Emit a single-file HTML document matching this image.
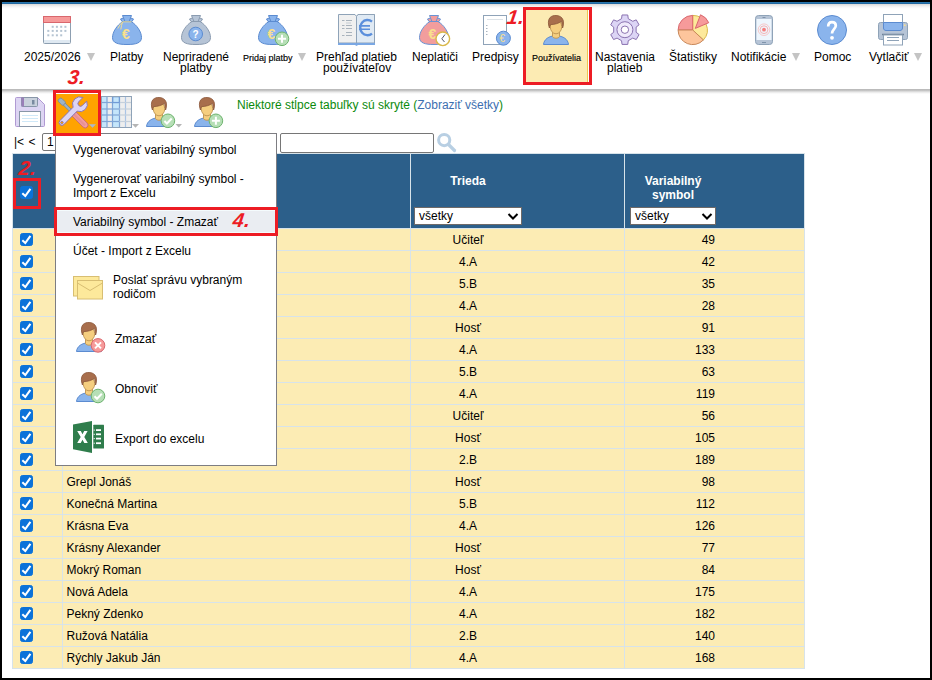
<!DOCTYPE html><html><head><meta charset="utf-8"><style>
*{box-sizing:border-box}html,body{margin:0;padding:0;width:932px;height:680px;overflow:hidden;background:#000}
body{font-family:"Liberation Sans",sans-serif;font-size:12px;color:#000;position:relative}
.a{position:absolute}.t{position:absolute;white-space:nowrap;line-height:12px;font-size:12px}.sm{-webkit-text-stroke:0.15px #000;transform:scaleY(1.1);transform-origin:0 7px}
.arr{position:absolute;width:0;height:0;border-left:4.5px solid transparent;border-right:4.5px solid transparent;border-top:8px solid #c4c4c4}
.n{position:absolute;font-weight:bold;font-style:italic;font-size:20px;line-height:20px;color:#ed1c24;white-space:nowrap;transform:skewX(-8deg);transform-origin:0 17px;letter-spacing:0.6px}
svg{position:absolute;left:0;top:0;overflow:visible}
</style></head><body>
<div class="a" style="left:2px;top:2px;width:928px;height:676px;background:#fff"></div>
<div class="a" style="left:2px;top:2px;width:928px;height:1px;background:#2a76ac"></div>
<div class="a" style="left:2px;top:3px;width:928px;height:1px;background:#2168a0"></div>
<div class="a" style="left:2px;top:4px;width:928px;height:5px;background:linear-gradient(#dcd8d4,#e3e3e3 20%,#eeeeee 40%,#f6f6f6 60%,#fbfbfb 80%,#fff)"></div>
<div class="a" style="left:2px;top:89px;width:928px;height:5px;background:linear-gradient(#bdbdbd,#b9b9b9 20%,#d0d0d0 40%,#e6e6e6 60%,#f4f4f4 80%,#fff)"></div>
<div class="a" style="left:523px;top:7px;width:69px;height:78px;background:#fcebb3"></div>
<div class="a" style="left:587px;top:10px;width:1px;height:72px;background:#eec74e"></div><div class="a" style="left:588px;top:10px;width:1px;height:72px;background:#fff"></div>
<div class="t" style="left:24px;top:51px;">2025/2026</div>
<div class="arr" style="left:87px;top:53px"></div>
<div class="t" style="left:110px;top:51px;">Platby</div>
<div class="t" style="left:163px;top:51px;">Nepriradené</div>
<div class="t" style="left:180px;top:62px;">platby</div>
<div class="t sm" style="left:243px;top:54px;font-size:9px;line-height:9px;">Pridaj platby</div>
<div class="arr" style="left:298px;top:53px"></div>
<div class="t" style="left:316px;top:51px;">Prehľad platieb</div>
<div class="t" style="left:323px;top:62px;">používateľov</div>
<div class="t" style="left:412px;top:51px;">Neplatiči</div>
<div class="t" style="left:472px;top:51px;">Predpisy</div>
<div class="t sm" style="left:532px;top:54px;font-size:9px;line-height:9px;">Používatelia</div>
<div class="t" style="left:595px;top:51px;">Nastavenia</div>
<div class="t" style="left:607px;top:62px;">platieb</div>
<div class="t" style="left:669px;top:51px;">Štatistiky</div>
<div class="t" style="left:731px;top:51px;">Notifikácie</div>
<div class="arr" style="left:792px;top:53px"></div>
<div class="t" style="left:814px;top:51px;">Pomoc</div>
<div class="t" style="left:869px;top:51px;">Vytlačiť</div>
<div class="arr" style="left:914px;top:53px"></div>
<svg width="932" height="680" viewBox="0 0 932 680"><rect x="43.5" y="16.5" width="27" height="27" rx="1" fill="#fff" stroke="#8d9fb1"/><rect x="44" y="40" width="26" height="3" fill="#dfe9f2"/><rect x="43.5" y="16.5" width="27" height="6" fill="#f69a9a" stroke="#d9676d"/><rect x="51.7" y="25.8" width="2" height="2" fill="#b5c4d2"/><rect x="55.9" y="25.8" width="2" height="2" fill="#b5c4d2"/><rect x="60.2" y="25.8" width="2" height="2" fill="#b5c4d2"/><rect x="64.4" y="25.8" width="2" height="2" fill="#b5c4d2"/><rect x="47.3" y="29.9" width="2" height="2" fill="#b5c4d2"/><rect x="51.7" y="29.9" width="2" height="2" fill="#b5c4d2"/><rect x="55.9" y="29.9" width="2" height="2" fill="#b5c4d2"/><rect x="60.2" y="29.9" width="2" height="2" fill="#b5c4d2"/><rect x="64.4" y="29.9" width="2" height="2" fill="#b5c4d2"/><rect x="47.3" y="34.3" width="2" height="2" fill="#b5c4d2"/><rect x="51.7" y="34.3" width="2" height="2" fill="#b5c4d2"/><rect x="55.9" y="34.3" width="2" height="2" fill="#b5c4d2"/><rect x="60.2" y="34.3" width="2" height="2" fill="#b5c4d2"/><g transform="translate(0,0)"><path d="M123 21.5 L131 21.5 C137 25 141.5 32 141.5 37.5 C141.5 43 136 44.5 127 44.5 C118 44.5 112.5 43 112.5 37.5 C112.5 32 117 25 123 21.5Z" fill="#8ab4ec" stroke="#5b8bd0"/><path d="M122.5 15.5 L131.5 15.5 L130.5 18 L133.5 19 L132 21.5 L122 21.5 L120.5 19 L123.5 18Z" fill="#8ab4ec" stroke="#5b8bd0" stroke-linejoin="round"/><path d="M123.5 18 L125 21.5 M130.5 18 L129 21.5" stroke="#5b8bd0" fill="none"/></g><path d="M122.5 21.8 H131.5 M122.5 22 Q119.5 24.5 117.8 28.5 M122.5 22 Q121.5 25 120.8 29.5" stroke="#f9e08c" stroke-width="0.9" fill="none"/><text x="122" y="38.8" font-family="Liberation Sans" font-weight="bold" font-size="14" fill="#f9e08c">€</text><g transform="translate(69,0)"><path d="M123 21.5 L131 21.5 C137 25 141.5 32 141.5 37.5 C141.5 43 136 44.5 127 44.5 C118 44.5 112.5 43 112.5 37.5 C112.5 32 117 25 123 21.5Z" fill="#b6c4d6" stroke="#8a9bb0"/><path d="M122.5 15.5 L131.5 15.5 L130.5 18 L133.5 19 L132 21.5 L122 21.5 L120.5 19 L123.5 18Z" fill="#b6c4d6" stroke="#8a9bb0" stroke-linejoin="round"/><path d="M123.5 18 L125 21.5 M130.5 18 L129 21.5" stroke="#8a9bb0" fill="none"/></g><circle cx="195.7" cy="34" r="6.8" fill="#8ab4ec" stroke="#5b8bd0"/><text x="192.6" y="38" font-family="Liberation Sans" font-weight="bold" font-size="10" fill="#fff">?</text><g transform="translate(146,0)"><path d="M123 21.5 L131 21.5 C137 25 141.5 32 141.5 37.5 C141.5 43 136 44.5 127 44.5 C118 44.5 112.5 43 112.5 37.5 C112.5 32 117 25 123 21.5Z" fill="#8ab4ec" stroke="#5b8bd0"/><path d="M122.5 15.5 L131.5 15.5 L130.5 18 L133.5 19 L132 21.5 L122 21.5 L120.5 19 L123.5 18Z" fill="#8ab4ec" stroke="#5b8bd0" stroke-linejoin="round"/><path d="M123.5 18 L125 21.5 M130.5 18 L129 21.5" stroke="#5b8bd0" fill="none"/></g><text x="267.5" y="38.8" font-family="Liberation Sans" font-weight="bold" font-size="14" fill="#f9e08c">€</text><circle cx="282" cy="38.8" r="6.8" fill="#b6dfb6" stroke="#6db36d"/><path d="M282 34.8 V42.8 M278 38.8 H286" stroke="#fff" stroke-width="2"/><path d="M338.5 43 V14.5 H355 L356.5 16.5 L358 14.5 H374.5 V43Z" fill="#f0f0f0" stroke="#8fa3b8"/><path d="M356.5 16.5 L358 14.5 H374.5 V43 H356.5Z" fill="#e0eaf4" stroke="#8fa3b8"/><path d="M338 43 H375 V45 H358 L356.5 46 L355 45 H338Z" fill="#7aa7e3"/><path d="M342 20.5 H344.5 M346 20.5 H352" stroke="#a9b3bd"/><path d="M342 25.5 H344.5 M346 25.5 H352" stroke="#a9b3bd"/><path d="M342 28.5 H344.5 M346 28.5 H352" stroke="#a9b3bd"/><path d="M342 35.5 H344.5 M346 35.5 H352" stroke="#a9b3bd"/><path d="M346 23 H351" stroke="#c5ccd3"/><path d="M346 32.5 H352" stroke="#a9b3bd"/><path d="M372 21.6 A7.3 7.6 0 1 0 372 33.6" stroke="#5b8fdc" stroke-width="2.4" fill="none"/><path d="M359 25.9 H370 M359 29.3 H370" stroke="#5b8fdc" stroke-width="1.6"/><g transform="translate(307,0)"><path d="M123 21.5 L131 21.5 C137 25 141.5 32 141.5 37.5 C141.5 43 136 44.5 127 44.5 C118 44.5 112.5 43 112.5 37.5 C112.5 32 117 25 123 21.5Z" fill="#f29d9d" stroke="#6a93d4"/><path d="M122.5 15.5 L131.5 15.5 L130.5 18 L133.5 19 L132 21.5 L122 21.5 L120.5 19 L123.5 18Z" fill="#f29d9d" stroke="#6a93d4" stroke-linejoin="round"/><path d="M123.5 18 L125 21.5 M130.5 18 L129 21.5" stroke="#6a93d4" fill="none"/></g><text x="428.5" y="38.8" font-family="Liberation Sans" font-weight="bold" font-size="14" fill="#f9e08c">€</text><circle cx="442.8" cy="38.8" r="6.8" fill="#fff" stroke="#d9b84a" stroke-width="1.4"/><path d="M445 34.5 L441.8 38.8 L444.5 42" stroke="#556" fill="none"/><rect x="483.5" y="15.5" width="23" height="29" fill="#fff" stroke="#8fa3b8"/><path d="M487 19.5 H503" stroke="#dde3e8"/><path d="M486 25.5 H487.5" stroke="#aab5c0"/><path d="M486 28.5 H487.5" stroke="#aab5c0"/><path d="M486 31.5 H487.5" stroke="#aab5c0"/><path d="M486 34.5 H487.5" stroke="#aab5c0"/><circle cx="503.4" cy="38.2" r="7" fill="#8ab4ec" stroke="#5b8bd0"/><text x="499.6" y="42" font-family="Liberation Sans" font-size="10" fill="#f9e08c">€</text><g transform="translate(543,15)"><path d="M0.5 29.5 C1 24.5 5.5 20.8 13 20.8 C20.5 20.8 25 24.5 25.5 29.5Z" fill="#8ab4ec" stroke="#5b8bd0"/><path d="M9.5 15 V21.5 C10.5 23.8 15.5 23.8 16.5 21.5 V15Z" fill="#f5ce7f" stroke="#c49a57"/><ellipse cx="13" cy="11.8" rx="5.7" ry="7" fill="#f5ce7f" stroke="#c49a57"/><path d="M6.4 13 C5 9 5 5 6.8 2.8 C8.6 0.8 11 0.4 13 0.5 C16.3 0.5 19 2 20.1 5 C20.8 7.5 20.5 10.5 19.6 13 C19.3 10 19 8 18.3 6.2 C16 8.5 11.2 9.5 7.5 9.6 C7 10.5 6.7 11.5 6.4 13Z" fill="#a86e4c" stroke="#8a5538" stroke-width="0.8" stroke-linejoin="round"/></g><path d="M621.54 18.70 L622.04 14.98 L627.76 14.98 L628.26 18.70 L632.74 21.29 L636.22 19.86 L639.08 24.82 L636.11 27.11 L636.11 32.29 L639.08 34.58 L636.22 39.54 L632.74 38.11 L628.26 40.70 L627.76 44.42 L622.04 44.42 L621.54 40.70 L617.06 38.11 L613.58 39.54 L610.72 34.58 L613.69 32.29 L613.69 27.11 L610.72 24.82 L613.58 19.86 L617.06 21.29Z" fill="#dcd5f5" stroke="#8a72b0" stroke-linejoin="round"/><circle cx="624.9" cy="29.7" r="8" fill="#efeafb" stroke="#8a72b0"/><circle cx="624.9" cy="29.7" r="3.7" fill="#fff" stroke="#8a72b0"/><path d="M692.7 30 L692.70 15.40 A14.6 14.6 0 0 1 703.38 39.96Z" fill="#fde99b" stroke="#d9b84a"/><path d="M692.7 30 L678.10 30.00 A14.6 14.6 0 0 1 692.70 15.40Z" fill="#f69a9a" stroke="#d9676d"/><path d="M692.7 30 L703.38 39.96 A14.6 14.6 0 0 1 678.10 30.00Z" fill="#fdc59c" stroke="#c8885a"/><path d="M695.30 28.40 L700.53 14.77 A14.6 14.6 0 0 1 708.74 22.70Z" fill="#f69a9a" stroke="#d9676d" stroke-linejoin="round"/><rect x="755.5" y="15.5" width="17" height="29" rx="3" fill="#b6c4d6" stroke="#8fa3b8"/><rect x="756.5" y="19" width="15" height="21" fill="#eef6fd"/><path d="M762.5 17.5 H765.5 M762 42.5 H766" stroke="#7f93aa"/><circle cx="764" cy="29.7" r="1.9" fill="#f57f7f"/><circle cx="764" cy="29.7" r="3.9" fill="none" stroke="#f5a3a3" stroke-width="0.8"/><circle cx="764" cy="29.7" r="5.8" fill="none" stroke="#f7bcbc" stroke-width="0.8"/><circle cx="832" cy="30" r="14.5" fill="#8ab4ec" stroke="#5b8bd0"/><path d="M828.2 26.5 C828.2 23.5 829.8 22.2 832 22.2 C834.2 22.2 835.8 23.6 835.8 25.8 C835.8 28.6 832 29.3 832 33.6" stroke="#fff" stroke-width="2.7" fill="none"/><circle cx="832" cy="37.8" r="1.9" fill="#fff"/><rect x="883.5" y="14.5" width="19" height="10" fill="#fff" stroke="#8fa3b8"/><rect x="878.5" y="22.5" width="29" height="17" rx="2" fill="#b6c4d6" stroke="#8fa3b8"/><path d="M883.5 22.5 H902.5 V28 C902.5 29.5 901.5 30.5 900 30.5 H886 C884.5 30.5 883.5 29.5 883.5 28Z" fill="#8ab4ec" stroke="#5b8bd0"/><rect x="904" y="24.5" width="1.5" height="1.5" fill="#f9e08c"/><path d="M882 34.5 H904" stroke="#6f8299" stroke-width="1.5"/><rect x="883.5" y="35" width="19" height="10" fill="#fff" stroke="#8fa3b8"/><path d="M887 37.5 H899 M887 40.5 H899" stroke="#8fa3b8"/></svg>
<div class="a" style="left:53px;top:90px;width:48px;height:46px;background:#ed1c24"></div>
<div class="a" style="left:56px;top:93px;width:42px;height:40px;background:#ffa300;border-top:1px solid #fff"></div>
<div class="t" style="left:237px;top:99px;color:#0b8a0b;">Niektoré stĺpce tabuľky sú skryté (<span style="color:#3d6fb0">Zobraziť všetky</span>)</div>
<div class="t" style="left:14px;top:136px;word-spacing:1px">|&lt; &lt;</div>
<div class="a" style="left:42px;top:133px;width:40px;height:18px;border:1px solid #767676;border-radius:2px;background:#fff"></div>
<div class="t" style="left:47px;top:136px;">1</div>
<div class="a" style="left:280px;top:133px;width:154px;height:20px;border:1px solid #767676;border-radius:2px;background:#fff"></div>
<div class="a" style="left:12px;top:153px;width:793px;height:516px;background:#d7e3ea"></div>
<div class="a" style="left:13px;top:154px;width:791px;height:74px;background:#2c5f8a"></div>
<div class="a" style="left:410px;top:154px;width:1px;height:74px;background:#d7e3ea"></div>
<div class="a" style="left:624px;top:154px;width:1px;height:74px;background:#d7e3ea"></div>
<div class="a" style="left:13px;top:229px;width:49px;height:21px;background:#fcecb4"></div>
<div class="a" style="left:63px;top:229px;width:347px;height:21px;background:#fcecb4"></div>
<div class="a" style="left:411px;top:229px;width:213px;height:21px;background:#fcecb4"></div>
<div class="a" style="left:625px;top:229px;width:179px;height:21px;background:#fcecb4"></div>
<div class="t" style="left:411px;width:114px;text-align:center;top:234px">Učiteľ</div>
<div class="t" style="left:625px;width:90px;text-align:right;top:234px">49</div>
<div class="a" style="left:13px;top:251px;width:49px;height:21px;background:#fcecb4"></div>
<div class="a" style="left:63px;top:251px;width:347px;height:21px;background:#fcecb4"></div>
<div class="a" style="left:411px;top:251px;width:213px;height:21px;background:#fcecb4"></div>
<div class="a" style="left:625px;top:251px;width:179px;height:21px;background:#fcecb4"></div>
<div class="t" style="left:411px;width:114px;text-align:center;top:256px">4.A</div>
<div class="t" style="left:625px;width:90px;text-align:right;top:256px">42</div>
<div class="a" style="left:13px;top:273px;width:49px;height:21px;background:#fcecb4"></div>
<div class="a" style="left:63px;top:273px;width:347px;height:21px;background:#fcecb4"></div>
<div class="a" style="left:411px;top:273px;width:213px;height:21px;background:#fcecb4"></div>
<div class="a" style="left:625px;top:273px;width:179px;height:21px;background:#fcecb4"></div>
<div class="t" style="left:411px;width:114px;text-align:center;top:278px">5.B</div>
<div class="t" style="left:625px;width:90px;text-align:right;top:278px">35</div>
<div class="a" style="left:13px;top:295px;width:49px;height:21px;background:#fcecb4"></div>
<div class="a" style="left:63px;top:295px;width:347px;height:21px;background:#fcecb4"></div>
<div class="a" style="left:411px;top:295px;width:213px;height:21px;background:#fcecb4"></div>
<div class="a" style="left:625px;top:295px;width:179px;height:21px;background:#fcecb4"></div>
<div class="t" style="left:411px;width:114px;text-align:center;top:300px">4.A</div>
<div class="t" style="left:625px;width:90px;text-align:right;top:300px">28</div>
<div class="a" style="left:13px;top:317px;width:49px;height:21px;background:#fcecb4"></div>
<div class="a" style="left:63px;top:317px;width:347px;height:21px;background:#fcecb4"></div>
<div class="a" style="left:411px;top:317px;width:213px;height:21px;background:#fcecb4"></div>
<div class="a" style="left:625px;top:317px;width:179px;height:21px;background:#fcecb4"></div>
<div class="t" style="left:411px;width:114px;text-align:center;top:322px">Hosť</div>
<div class="t" style="left:625px;width:90px;text-align:right;top:322px">91</div>
<div class="a" style="left:13px;top:339px;width:49px;height:21px;background:#fcecb4"></div>
<div class="a" style="left:63px;top:339px;width:347px;height:21px;background:#fcecb4"></div>
<div class="a" style="left:411px;top:339px;width:213px;height:21px;background:#fcecb4"></div>
<div class="a" style="left:625px;top:339px;width:179px;height:21px;background:#fcecb4"></div>
<div class="t" style="left:411px;width:114px;text-align:center;top:344px">4.A</div>
<div class="t" style="left:625px;width:90px;text-align:right;top:344px">133</div>
<div class="a" style="left:13px;top:361px;width:49px;height:21px;background:#fcecb4"></div>
<div class="a" style="left:63px;top:361px;width:347px;height:21px;background:#fcecb4"></div>
<div class="a" style="left:411px;top:361px;width:213px;height:21px;background:#fcecb4"></div>
<div class="a" style="left:625px;top:361px;width:179px;height:21px;background:#fcecb4"></div>
<div class="t" style="left:411px;width:114px;text-align:center;top:366px">5.B</div>
<div class="t" style="left:625px;width:90px;text-align:right;top:366px">63</div>
<div class="a" style="left:13px;top:383px;width:49px;height:21px;background:#fcecb4"></div>
<div class="a" style="left:63px;top:383px;width:347px;height:21px;background:#fcecb4"></div>
<div class="a" style="left:411px;top:383px;width:213px;height:21px;background:#fcecb4"></div>
<div class="a" style="left:625px;top:383px;width:179px;height:21px;background:#fcecb4"></div>
<div class="t" style="left:411px;width:114px;text-align:center;top:388px">4.A</div>
<div class="t" style="left:625px;width:90px;text-align:right;top:388px">119</div>
<div class="a" style="left:13px;top:405px;width:49px;height:21px;background:#fcecb4"></div>
<div class="a" style="left:63px;top:405px;width:347px;height:21px;background:#fcecb4"></div>
<div class="a" style="left:411px;top:405px;width:213px;height:21px;background:#fcecb4"></div>
<div class="a" style="left:625px;top:405px;width:179px;height:21px;background:#fcecb4"></div>
<div class="t" style="left:411px;width:114px;text-align:center;top:410px">Učiteľ</div>
<div class="t" style="left:625px;width:90px;text-align:right;top:410px">56</div>
<div class="a" style="left:13px;top:427px;width:49px;height:21px;background:#fcecb4"></div>
<div class="a" style="left:63px;top:427px;width:347px;height:21px;background:#fcecb4"></div>
<div class="a" style="left:411px;top:427px;width:213px;height:21px;background:#fcecb4"></div>
<div class="a" style="left:625px;top:427px;width:179px;height:21px;background:#fcecb4"></div>
<div class="t" style="left:411px;width:114px;text-align:center;top:432px">Hosť</div>
<div class="t" style="left:625px;width:90px;text-align:right;top:432px">105</div>
<div class="a" style="left:13px;top:449px;width:49px;height:21px;background:#fcecb4"></div>
<div class="a" style="left:63px;top:449px;width:347px;height:21px;background:#fcecb4"></div>
<div class="a" style="left:411px;top:449px;width:213px;height:21px;background:#fcecb4"></div>
<div class="a" style="left:625px;top:449px;width:179px;height:21px;background:#fcecb4"></div>
<div class="t" style="left:411px;width:114px;text-align:center;top:454px">2.B</div>
<div class="t" style="left:625px;width:90px;text-align:right;top:454px">189</div>
<div class="a" style="left:13px;top:471px;width:49px;height:21px;background:#fcecb4"></div>
<div class="a" style="left:63px;top:471px;width:347px;height:21px;background:#fcecb4"></div>
<div class="a" style="left:411px;top:471px;width:213px;height:21px;background:#fcecb4"></div>
<div class="a" style="left:625px;top:471px;width:179px;height:21px;background:#fcecb4"></div>
<div class="t" style="left:66.5px;top:476px;">Grepl Jonáš</div>
<div class="t" style="left:411px;width:114px;text-align:center;top:476px">Hosť</div>
<div class="t" style="left:625px;width:90px;text-align:right;top:476px">98</div>
<div class="a" style="left:13px;top:493px;width:49px;height:21px;background:#fcecb4"></div>
<div class="a" style="left:63px;top:493px;width:347px;height:21px;background:#fcecb4"></div>
<div class="a" style="left:411px;top:493px;width:213px;height:21px;background:#fcecb4"></div>
<div class="a" style="left:625px;top:493px;width:179px;height:21px;background:#fcecb4"></div>
<div class="t" style="left:66.5px;top:498px;">Konečná Martina</div>
<div class="t" style="left:411px;width:114px;text-align:center;top:498px">5.B</div>
<div class="t" style="left:625px;width:90px;text-align:right;top:498px">112</div>
<div class="a" style="left:13px;top:515px;width:49px;height:21px;background:#fcecb4"></div>
<div class="a" style="left:63px;top:515px;width:347px;height:21px;background:#fcecb4"></div>
<div class="a" style="left:411px;top:515px;width:213px;height:21px;background:#fcecb4"></div>
<div class="a" style="left:625px;top:515px;width:179px;height:21px;background:#fcecb4"></div>
<div class="t" style="left:66.5px;top:520px;">Krásna Eva</div>
<div class="t" style="left:411px;width:114px;text-align:center;top:520px">4.A</div>
<div class="t" style="left:625px;width:90px;text-align:right;top:520px">126</div>
<div class="a" style="left:13px;top:537px;width:49px;height:21px;background:#fcecb4"></div>
<div class="a" style="left:63px;top:537px;width:347px;height:21px;background:#fcecb4"></div>
<div class="a" style="left:411px;top:537px;width:213px;height:21px;background:#fcecb4"></div>
<div class="a" style="left:625px;top:537px;width:179px;height:21px;background:#fcecb4"></div>
<div class="t" style="left:66.5px;top:542px;">Krásny Alexander</div>
<div class="t" style="left:411px;width:114px;text-align:center;top:542px">Hosť</div>
<div class="t" style="left:625px;width:90px;text-align:right;top:542px">77</div>
<div class="a" style="left:13px;top:559px;width:49px;height:21px;background:#fcecb4"></div>
<div class="a" style="left:63px;top:559px;width:347px;height:21px;background:#fcecb4"></div>
<div class="a" style="left:411px;top:559px;width:213px;height:21px;background:#fcecb4"></div>
<div class="a" style="left:625px;top:559px;width:179px;height:21px;background:#fcecb4"></div>
<div class="t" style="left:66.5px;top:564px;">Mokrý Roman</div>
<div class="t" style="left:411px;width:114px;text-align:center;top:564px">Hosť</div>
<div class="t" style="left:625px;width:90px;text-align:right;top:564px">84</div>
<div class="a" style="left:13px;top:581px;width:49px;height:21px;background:#fcecb4"></div>
<div class="a" style="left:63px;top:581px;width:347px;height:21px;background:#fcecb4"></div>
<div class="a" style="left:411px;top:581px;width:213px;height:21px;background:#fcecb4"></div>
<div class="a" style="left:625px;top:581px;width:179px;height:21px;background:#fcecb4"></div>
<div class="t" style="left:66.5px;top:586px;">Nová Adela</div>
<div class="t" style="left:411px;width:114px;text-align:center;top:586px">4.A</div>
<div class="t" style="left:625px;width:90px;text-align:right;top:586px">175</div>
<div class="a" style="left:13px;top:603px;width:49px;height:21px;background:#fcecb4"></div>
<div class="a" style="left:63px;top:603px;width:347px;height:21px;background:#fcecb4"></div>
<div class="a" style="left:411px;top:603px;width:213px;height:21px;background:#fcecb4"></div>
<div class="a" style="left:625px;top:603px;width:179px;height:21px;background:#fcecb4"></div>
<div class="t" style="left:66.5px;top:608px;">Pekný Zdenko</div>
<div class="t" style="left:411px;width:114px;text-align:center;top:608px">4.A</div>
<div class="t" style="left:625px;width:90px;text-align:right;top:608px">182</div>
<div class="a" style="left:13px;top:625px;width:49px;height:21px;background:#fcecb4"></div>
<div class="a" style="left:63px;top:625px;width:347px;height:21px;background:#fcecb4"></div>
<div class="a" style="left:411px;top:625px;width:213px;height:21px;background:#fcecb4"></div>
<div class="a" style="left:625px;top:625px;width:179px;height:21px;background:#fcecb4"></div>
<div class="t" style="left:66.5px;top:630px;">Ružová Natália</div>
<div class="t" style="left:411px;width:114px;text-align:center;top:630px">2.B</div>
<div class="t" style="left:625px;width:90px;text-align:right;top:630px">140</div>
<div class="a" style="left:13px;top:647px;width:49px;height:21px;background:#fcecb4"></div>
<div class="a" style="left:63px;top:647px;width:347px;height:21px;background:#fcecb4"></div>
<div class="a" style="left:411px;top:647px;width:213px;height:21px;background:#fcecb4"></div>
<div class="a" style="left:625px;top:647px;width:179px;height:21px;background:#fcecb4"></div>
<div class="t" style="left:66.5px;top:652px;">Rýchly Jakub Ján</div>
<div class="t" style="left:411px;width:114px;text-align:center;top:652px">4.A</div>
<div class="t" style="left:625px;width:90px;text-align:right;top:652px">168</div>
<div class="t" style="left:411px;width:114px;text-align:center;top:175px;color:#fff;font-weight:bold">Trieda</div>
<div class="t" style="left:625px;width:96px;text-align:center;top:174px;color:#fff;font-weight:bold;line-height:14px;white-space:normal">Variabilný<br>symbol</div>
<div class="a" style="left:414px;top:207px;width:108px;height:18px;border:1px solid #6f6a68;background:#fff"></div>
<div class="t" style="left:419px;top:210px;">všetky</div>
<svg width="932" height="680"><path d="M508.5 214 L513 218.5 L517.5 214" stroke="#000" stroke-width="2" fill="none"/></svg>
<div class="a" style="left:630px;top:207px;width:86px;height:18px;border:1px solid #6f6a68;background:#fff"></div>
<div class="t" style="left:635px;top:210px;">všetky</div>
<svg width="932" height="680"><path d="M702.5 214 L707 218.5 L711.5 214" stroke="#000" stroke-width="2" fill="none"/></svg>
<svg width="932" height="680"><rect x="20.5" y="186.5" width="12" height="12" rx="2" fill="#0b72d9" stroke="#0b72d9"/><path d="M22.3 193.2 L25.3 196 L30.4 188.8" stroke="#fff" stroke-width="2.1" fill="none"/><rect x="20.5" y="233.5" width="12" height="12" rx="2" fill="#0b72d9" stroke="#0b72d9"/><path d="M22.3 240.2 L25.3 243 L30.4 235.8" stroke="#fff" stroke-width="2.1" fill="none"/><rect x="20.5" y="255.5" width="12" height="12" rx="2" fill="#0b72d9" stroke="#0b72d9"/><path d="M22.3 262.2 L25.3 265 L30.4 257.8" stroke="#fff" stroke-width="2.1" fill="none"/><rect x="20.5" y="277.5" width="12" height="12" rx="2" fill="#0b72d9" stroke="#0b72d9"/><path d="M22.3 284.2 L25.3 287 L30.4 279.8" stroke="#fff" stroke-width="2.1" fill="none"/><rect x="20.5" y="299.5" width="12" height="12" rx="2" fill="#0b72d9" stroke="#0b72d9"/><path d="M22.3 306.2 L25.3 309 L30.4 301.8" stroke="#fff" stroke-width="2.1" fill="none"/><rect x="20.5" y="321.5" width="12" height="12" rx="2" fill="#0b72d9" stroke="#0b72d9"/><path d="M22.3 328.2 L25.3 331 L30.4 323.8" stroke="#fff" stroke-width="2.1" fill="none"/><rect x="20.5" y="343.5" width="12" height="12" rx="2" fill="#0b72d9" stroke="#0b72d9"/><path d="M22.3 350.2 L25.3 353 L30.4 345.8" stroke="#fff" stroke-width="2.1" fill="none"/><rect x="20.5" y="365.5" width="12" height="12" rx="2" fill="#0b72d9" stroke="#0b72d9"/><path d="M22.3 372.2 L25.3 375 L30.4 367.8" stroke="#fff" stroke-width="2.1" fill="none"/><rect x="20.5" y="387.5" width="12" height="12" rx="2" fill="#0b72d9" stroke="#0b72d9"/><path d="M22.3 394.2 L25.3 397 L30.4 389.8" stroke="#fff" stroke-width="2.1" fill="none"/><rect x="20.5" y="409.5" width="12" height="12" rx="2" fill="#0b72d9" stroke="#0b72d9"/><path d="M22.3 416.2 L25.3 419 L30.4 411.8" stroke="#fff" stroke-width="2.1" fill="none"/><rect x="20.5" y="431.5" width="12" height="12" rx="2" fill="#0b72d9" stroke="#0b72d9"/><path d="M22.3 438.2 L25.3 441 L30.4 433.8" stroke="#fff" stroke-width="2.1" fill="none"/><rect x="20.5" y="453.5" width="12" height="12" rx="2" fill="#0b72d9" stroke="#0b72d9"/><path d="M22.3 460.2 L25.3 463 L30.4 455.8" stroke="#fff" stroke-width="2.1" fill="none"/><rect x="20.5" y="475.5" width="12" height="12" rx="2" fill="#0b72d9" stroke="#0b72d9"/><path d="M22.3 482.2 L25.3 485 L30.4 477.8" stroke="#fff" stroke-width="2.1" fill="none"/><rect x="20.5" y="497.5" width="12" height="12" rx="2" fill="#0b72d9" stroke="#0b72d9"/><path d="M22.3 504.2 L25.3 507 L30.4 499.8" stroke="#fff" stroke-width="2.1" fill="none"/><rect x="20.5" y="519.5" width="12" height="12" rx="2" fill="#0b72d9" stroke="#0b72d9"/><path d="M22.3 526.2 L25.3 529 L30.4 521.8" stroke="#fff" stroke-width="2.1" fill="none"/><rect x="20.5" y="541.5" width="12" height="12" rx="2" fill="#0b72d9" stroke="#0b72d9"/><path d="M22.3 548.2 L25.3 551 L30.4 543.8" stroke="#fff" stroke-width="2.1" fill="none"/><rect x="20.5" y="563.5" width="12" height="12" rx="2" fill="#0b72d9" stroke="#0b72d9"/><path d="M22.3 570.2 L25.3 573 L30.4 565.8" stroke="#fff" stroke-width="2.1" fill="none"/><rect x="20.5" y="585.5" width="12" height="12" rx="2" fill="#0b72d9" stroke="#0b72d9"/><path d="M22.3 592.2 L25.3 595 L30.4 587.8" stroke="#fff" stroke-width="2.1" fill="none"/><rect x="20.5" y="607.5" width="12" height="12" rx="2" fill="#0b72d9" stroke="#0b72d9"/><path d="M22.3 614.2 L25.3 617 L30.4 609.8" stroke="#fff" stroke-width="2.1" fill="none"/><rect x="20.5" y="629.5" width="12" height="12" rx="2" fill="#0b72d9" stroke="#0b72d9"/><path d="M22.3 636.2 L25.3 639 L30.4 631.8" stroke="#fff" stroke-width="2.1" fill="none"/><rect x="20.5" y="651.5" width="12" height="12" rx="2" fill="#0b72d9" stroke="#0b72d9"/><path d="M22.3 658.2 L25.3 661 L30.4 653.8" stroke="#fff" stroke-width="2.1" fill="none"/></svg>
<svg width="932" height="680"><circle cx="444.2" cy="140.1" r="5.6" fill="none" stroke="#b8cfe3" stroke-width="3"/><path d="M448.5 144.5 L454.5 150.5" stroke="#b8cfe3" stroke-width="3.2" stroke-linecap="round"/></svg>
<div class="a" style="left:55px;top:133px;width:222px;height:333px;border:1px solid #7d7d82;background:#fff"></div>
<div class="a" style="left:54px;top:207px;width:224px;height:29px;background:#ed1c24"></div>
<div class="a" style="left:57px;top:210px;width:218px;height:23px;background:#eaedf2;border-top:1px solid #f4fbfd;border-bottom:1px solid #f4fbfd"></div>
<div class="t" style="left:73px;top:144px;">Vygenerovať variabilný symbol</div>
<div class="t" style="left:73px;top:173px;">Vygenerovať variabilný symbol -</div>
<div class="t" style="left:73px;top:187px;">Import z Excelu</div>
<div class="t" style="left:73px;top:216px;">Variabilný symbol - Zmazať</div>
<div class="t" style="left:73px;top:245px;">Účet - Import z Excelu</div>
<div class="t" style="left:113px;top:274px;">Poslať správu vybraným</div>
<div class="t" style="left:113px;top:288px;">rodičom</div>
<div class="t" style="left:115px;top:333px;">Zmazať</div>
<div class="t" style="left:115px;top:383px;">Obnoviť</div>
<div class="t" style="left:115px;top:433px;">Export do excelu</div>
<svg width="932" height="680"><path d="M15.5 98.5 Q15.5 97.5 16.5 97.5 L37.5 97.5 L44.5 104.5 L44.5 125.5 Q44.5 126.5 43.5 126.5 L16.5 126.5 Q15.5 126.5 15.5 125.5Z" fill="#ddd5f3" stroke="#b09ad3"/><path d="M21.5 97.5 L37.5 97.5 L37.5 105.5 Q37.5 106.5 36.5 106.5 L22.5 106.5 Q21.5 106.5 21.5 105.5Z" fill="#c9d1dc" stroke="#8896a8"/><rect x="21.5" y="97.5" width="2.5" height="9" fill="#9a7fb8"/><rect x="32" y="100" width="2.5" height="4.5" fill="#7a8ba0"/><rect x="19.5" y="111.5" width="21" height="15" fill="#fff" stroke="#8896a8"/><path d="M22 115.5 H38 M22 118.5 H38 M22 121.5 H38" stroke="#cfe8f8"/><g transform="translate(59.4,99.3) rotate(45)"><rect x="0" y="-1.3" width="17" height="2.6" fill="#9fb3c6" stroke="#7289a3" stroke-width="0.8"/><rect x="-0.3" y="-2.3" width="7.3" height="4.6" rx="1.6" fill="#9fb3c6" stroke="#7289a3" stroke-width="0.8"/><rect x="17" y="-2.85" width="22.3" height="5.7" rx="2.85" fill="#f29d9d" stroke="#c96a72" stroke-width="0.9"/><path d="M20.5 -0.2 H36.5 M20.5 1 H36.5" stroke="#d97f86" stroke-width="0.6"/></g><g transform="translate(61.9,122.6) rotate(-45.5)"><path d="M0 2.8 A2.8 2.8 0 0 1 0 -2.8 L18.85 -2.8 A7.4 7.4 0 0 1 32.63 -2.6 L26.6 -2.6 A2.6 2.6 0 0 0 26.6 2.6 L32.63 2.6 A7.4 7.4 0 0 1 18.85 2.8 Z" fill="#dcd5f5" stroke="#8a72b0" stroke-width="0.9" stroke-linejoin="round"/><circle cx="0" cy="0" r="1.3" fill="#ffa300" stroke="#8a72b0" stroke-width="0.8"/></g><path d="M89 124.3 L96 124.3 L92.5 127.8Z" fill="#a9bad0"/><rect x="101" y="96" width="6" height="6.5" fill="#c5e6fb"/><rect x="101" y="102.5" width="6" height="6.5" fill="#c5e6fb"/><rect x="101" y="109" width="6" height="6" fill="#c5e6fb"/><rect x="101" y="115" width="6" height="6.5" fill="#c5e6fb"/><rect x="101" y="121.5" width="6" height="6.5" fill="#c5e6fb"/><rect x="107" y="96" width="5.5" height="6.5" fill="#eeeeee"/><rect x="107" y="102.5" width="5.5" height="6.5" fill="#eeeeee"/><rect x="107" y="109" width="5.5" height="6" fill="#eeeeee"/><rect x="107" y="115" width="5.5" height="6.5" fill="#eeeeee"/><rect x="107" y="121.5" width="5.5" height="6.5" fill="#eeeeee"/><rect x="112.5" y="96" width="7.0" height="6.5" fill="#c5e6fb"/><rect x="112.5" y="102.5" width="7.0" height="6.5" fill="#c5e6fb"/><rect x="112.5" y="109" width="7.0" height="6" fill="#c5e6fb"/><rect x="112.5" y="115" width="7.0" height="6.5" fill="#c5e6fb"/><rect x="112.5" y="121.5" width="7.0" height="6.5" fill="#c5e6fb"/><rect x="119.5" y="96" width="6.0" height="6.5" fill="#eeeeee"/><rect x="119.5" y="102.5" width="6.0" height="6.5" fill="#eeeeee"/><rect x="119.5" y="109" width="6.0" height="6" fill="#eeeeee"/><rect x="119.5" y="115" width="6.0" height="6.5" fill="#eeeeee"/><rect x="119.5" y="121.5" width="6.0" height="6.5" fill="#eeeeee"/><rect x="125.5" y="96" width="6.5" height="6.5" fill="#eeeeee"/><rect x="125.5" y="102.5" width="6.5" height="6.5" fill="#eeeeee"/><rect x="125.5" y="109" width="6.5" height="6" fill="#eeeeee"/><rect x="125.5" y="115" width="6.5" height="6.5" fill="#eeeeee"/><rect x="125.5" y="121.5" width="6.5" height="6.5" fill="#eeeeee"/><path d="M107 96.5 V127.5" stroke="#7fa5d6" stroke-width="1.2"/><path d="M112.5 96.5 V127.5" stroke="#7fa5d6" stroke-width="1.2"/><path d="M119.5 96.5 V127.5" stroke="#7fa5d6" stroke-width="1.2"/><path d="M125.5 96.5 V127.5" stroke="#a9c4e6" stroke-width="1.2"/><path d="M101.5 102.5 H119.5" stroke="#7fa5d6" stroke-width="1.2"/><path d="M119.5 102.5 H131.5" stroke="#c5d0dc" stroke-width="1.2"/><path d="M101.5 109 H119.5" stroke="#7fa5d6" stroke-width="1.2"/><path d="M119.5 109 H131.5" stroke="#c5d0dc" stroke-width="1.2"/><path d="M101.5 115 H119.5" stroke="#7fa5d6" stroke-width="1.2"/><path d="M119.5 115 H131.5" stroke="#c5d0dc" stroke-width="1.2"/><path d="M101.5 121.5 H119.5" stroke="#7fa5d6" stroke-width="1.2"/><path d="M119.5 121.5 H131.5" stroke="#c5d0dc" stroke-width="1.2"/><rect x="112.8" y="96.8" width="6.5" height="5.8" fill="none" stroke="#6f9ad6" stroke-width="1"/><rect x="101.5" y="96.5" width="30" height="31" fill="none" stroke="#8fa3b8"/><path d="M132 124 L139 124 L135.5 127.8Z" fill="#b5b5b5"/><g transform="translate(146,97)"><path d="M0.5 29.5 C1 24.5 5.5 20.8 13 20.8 C20.5 20.8 25 24.5 25.5 29.5Z" fill="#8ab4ec" stroke="#5b8bd0"/><path d="M9.5 15 V21.5 C10.5 23.8 15.5 23.8 16.5 21.5 V15Z" fill="#f5ce7f" stroke="#c49a57"/><ellipse cx="13" cy="11.8" rx="5.7" ry="7" fill="#f5ce7f" stroke="#c49a57"/><path d="M6.4 13 C5 9 5 5 6.8 2.8 C8.6 0.8 11 0.4 13 0.5 C16.3 0.5 19 2 20.1 5 C20.8 7.5 20.5 10.5 19.6 13 C19.3 10 19 8 18.3 6.2 C16 8.5 11.2 9.5 7.5 9.6 C7 10.5 6.7 11.5 6.4 13Z" fill="#a86e4c" stroke="#8a5538" stroke-width="0.8" stroke-linejoin="round"/></g><circle cx="167.9" cy="120.8" r="6.8" fill="#b6dfb6" stroke="#6db36d"/><path d="M164.4 121.0 L166.9 123.5 L171.70000000000002 118.5" stroke="#fff" stroke-width="2" fill="none"/><path d="M175.5 124 L182 124 L178.8 127.6Z" fill="#b5b5b5"/><g transform="translate(194,97)"><path d="M0.5 29.5 C1 24.5 5.5 20.8 13 20.8 C20.5 20.8 25 24.5 25.5 29.5Z" fill="#8ab4ec" stroke="#5b8bd0"/><path d="M9.5 15 V21.5 C10.5 23.8 15.5 23.8 16.5 21.5 V15Z" fill="#f5ce7f" stroke="#c49a57"/><ellipse cx="13" cy="11.8" rx="5.7" ry="7" fill="#f5ce7f" stroke="#c49a57"/><path d="M6.4 13 C5 9 5 5 6.8 2.8 C8.6 0.8 11 0.4 13 0.5 C16.3 0.5 19 2 20.1 5 C20.8 7.5 20.5 10.5 19.6 13 C19.3 10 19 8 18.3 6.2 C16 8.5 11.2 9.5 7.5 9.6 C7 10.5 6.7 11.5 6.4 13Z" fill="#a86e4c" stroke="#8a5538" stroke-width="0.8" stroke-linejoin="round"/></g><circle cx="215.9" cy="120.8" r="6.8" fill="#b6dfb6" stroke="#6db36d"/><path d="M215.9 116.8 V124.8 M211.9 120.8 H219.9" stroke="#fff" stroke-width="2"/></svg>
<svg width="932" height="680"><rect x="73.5" y="276.5" width="25.5" height="19.5" fill="#fde99b" stroke="#d8be72"/><rect x="77.5" y="280.5" width="25" height="18.5" fill="#fde99b" stroke="#d8be72"/><path d="M77.5 283 L90 290.5 L102.5 283" fill="none" stroke="#d8be72"/><g transform="translate(76,322)"><path d="M0.5 29.5 C1 24.5 5.5 20.8 13 20.8 C20.5 20.8 25 24.5 25.5 29.5Z" fill="#8ab4ec" stroke="#5b8bd0"/><path d="M9.5 15 V21.5 C10.5 23.8 15.5 23.8 16.5 21.5 V15Z" fill="#f5ce7f" stroke="#c49a57"/><ellipse cx="13" cy="11.8" rx="5.7" ry="7" fill="#f5ce7f" stroke="#c49a57"/><path d="M6.4 13 C5 9 5 5 6.8 2.8 C8.6 0.8 11 0.4 13 0.5 C16.3 0.5 19 2 20.1 5 C20.8 7.5 20.5 10.5 19.6 13 C19.3 10 19 8 18.3 6.2 C16 8.5 11.2 9.5 7.5 9.6 C7 10.5 6.7 11.5 6.4 13Z" fill="#a86e4c" stroke="#8a5538" stroke-width="0.8" stroke-linejoin="round"/></g><circle cx="98" cy="345.4" r="6.8" fill="#f69a9a" stroke="#d9676d"/><path d="M95 342.4 L101 348.4 M101 342.4 L95 348.4" stroke="#fff" stroke-width="2"/><g transform="translate(76,372)"><path d="M0.5 29.5 C1 24.5 5.5 20.8 13 20.8 C20.5 20.8 25 24.5 25.5 29.5Z" fill="#8ab4ec" stroke="#5b8bd0"/><path d="M9.5 15 V21.5 C10.5 23.8 15.5 23.8 16.5 21.5 V15Z" fill="#f5ce7f" stroke="#c49a57"/><ellipse cx="13" cy="11.8" rx="5.7" ry="7" fill="#f5ce7f" stroke="#c49a57"/><path d="M6.4 13 C5 9 5 5 6.8 2.8 C8.6 0.8 11 0.4 13 0.5 C16.3 0.5 19 2 20.1 5 C20.8 7.5 20.5 10.5 19.6 13 C19.3 10 19 8 18.3 6.2 C16 8.5 11.2 9.5 7.5 9.6 C7 10.5 6.7 11.5 6.4 13Z" fill="#a86e4c" stroke="#8a5538" stroke-width="0.8" stroke-linejoin="round"/></g><circle cx="98" cy="396" r="6.8" fill="#b6dfb6" stroke="#6db36d"/><path d="M94.5 396.2 L97 398.7 L101.8 393.7" stroke="#fff" stroke-width="2" fill="none"/><path d="M73 424.5 L92 421 L92 453 L73 449.2Z" fill="#2f7d4c"/><rect x="93.3" y="424.8" width="10.7" height="23.8" rx="0.5" fill="#2f7d4c"/><path d="M96 430.1 H101" stroke="#fff" stroke-width="1.8"/><path d="M93.5 430.1 H95" stroke="#cfe3d6" stroke-width="1"/><path d="M96 434.3 H101" stroke="#fff" stroke-width="1.8"/><path d="M93.5 434.3 H95" stroke="#cfe3d6" stroke-width="1"/><path d="M96 438.6 H101" stroke="#fff" stroke-width="1.8"/><path d="M93.5 438.6 H95" stroke="#cfe3d6" stroke-width="1"/><path d="M96 443.2 H101" stroke="#fff" stroke-width="1.8"/><path d="M93.5 443.2 H95" stroke="#cfe3d6" stroke-width="1"/><path d="M77.2 431 H80.8 L82.5 434.2 L84.2 431 H87.6 L84.3 437 L87.8 443.1 H84.3 L82.5 439.7 L80.7 443.1 H77.2 L80.7 437Z" fill="#fff"/></svg>
<div class="a" style="left:13px;top:178px;width:28px;height:31px;border:3px solid #ed1c24"></div>
<div class="a" style="left:53px;top:133px;width:48px;height:3px;background:#ed1c24"></div>
<div class="n" style="left:67px;top:67px">3.</div>
<div class="n" style="left:232px;top:210px">4.</div>
<div class="n" style="left:18px;top:158px">2.</div>
<div class="n" style="left:506px;top:7px">1.</div>
<div class="a" style="left:523px;top:7px;width:69px;height:78px;border:3px solid #ed1c24"></div>
</body></html>
